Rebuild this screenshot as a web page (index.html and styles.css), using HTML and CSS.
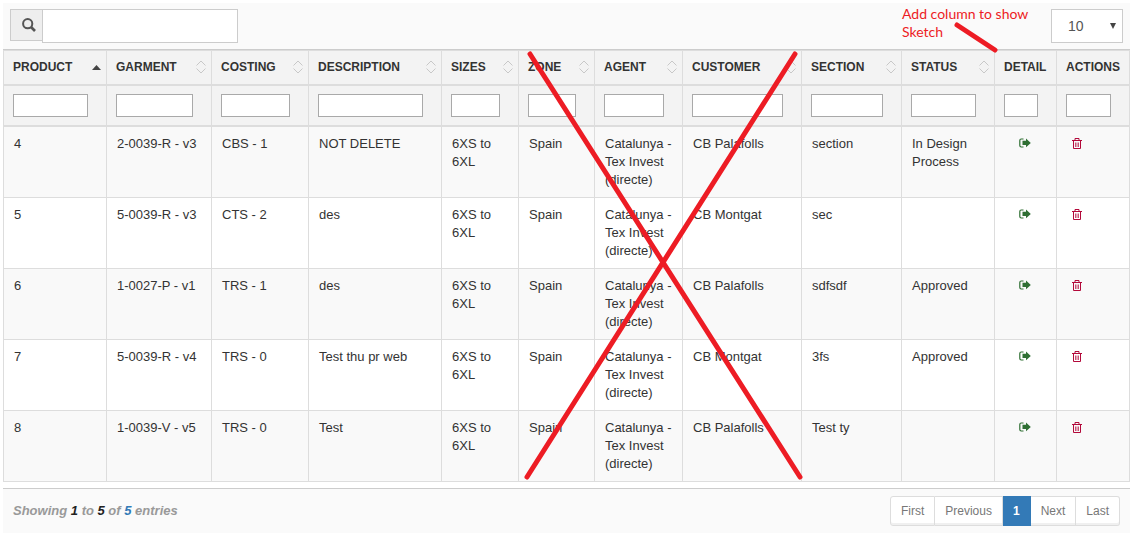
FILE: index.html
```html
<!DOCTYPE html>
<html lang="en">
<head>
<meta charset="utf-8">
<title>Products</title>
<link rel="stylesheet" href="styles.css">
</head>
<body>
<svg class="sprite" aria-hidden="true">
  <symbol id="open" viewBox="0 0 12 10">
    <path d="M4.500 1H2.200Q.8 1 .8 2.400V7.600Q.8 9 2.200 9H4.500" fill="none" stroke="currentColor" stroke-width="1.200"/>
    <path d="M3.500 2.800H7V.5L11.800 5 7 9.300V7H3.500Z" fill="currentColor"/>
  </symbol>
  <symbol id="trash" viewBox="0 0 10 11">
    <path d="M0 2.500H10M3 2.500V.5H7V2.500M1.500 2.500V10.500H8.500V2.500" fill="none" stroke="currentColor"/>
    <path d="M3.500 4.500V9M5 4.500V9M6.500 4.500V9" fill="none" stroke="currentColor" stroke-width=".7"/>
  </symbol>
  <symbol id="sort" viewBox="0 0 10 14">
    <path d="M.5 5.500 5 1 9.500 5.500M.5 8.500 5 13 9.500 8.500" fill="none" stroke="currentColor"/>
  </symbol>
</svg>
<main class="grid-panel">
  <div class="toolbar">
    <form class="search">
      <button class="search-button" type="button" aria-label="Search">
        <svg width="14" height="14" viewBox="0 0 14 14" aria-hidden="true"><circle cx="5.700" cy="5.700" r="4.600" fill="none" stroke="currentColor" stroke-width="2"/><path d="M9 9 13 13" stroke="currentColor" stroke-width="2.600"/></svg>
      </button>
      <input class="search-input" type="text" aria-label="Search products">
    </form>
    <p class="note">Add column to show<br>Sketch</p>
    <select class="page-size" aria-label="Entries per page"><option>10</option><option>25</option><option>50</option></select>
    <svg class="caret" width="6" height="6" viewBox="0 0 6 6" aria-hidden="true"><path d="M0 0H6L3 6Z" fill="currentColor"/></svg>
  </div>
  <table class="grid">
    <colgroup><col class="c1"><col class="c2"><col class="c3"><col class="c4"><col class="c5"><col class="c6"><col class="c7"><col class="c8"><col class="c9"><col class="c10"><col class="c11"><col class="c12"></colgroup>
    <thead>
      <tr class="heads">
        <th><div class="head">PRODUCT<svg class="sorted" width="9" height="5" viewBox="0 0 9 5"><path d="M0 5 4.500 0 9 5Z" fill="currentColor"/></svg></div></th>
        <th><div class="head">GARMENT<svg class="sort"><use href="#sort"/></svg></div></th>
        <th><div class="head">COSTING<svg class="sort"><use href="#sort"/></svg></div></th>
        <th><div class="head">DESCRIPTION<svg class="sort"><use href="#sort"/></svg></div></th>
        <th><div class="head">SIZES<svg class="sort"><use href="#sort"/></svg></div></th>
        <th><div class="head">ZONE<svg class="sort"><use href="#sort"/></svg></div></th>
        <th><div class="head">AGENT<svg class="sort"><use href="#sort"/></svg></div></th>
        <th><div class="head">CUSTOMER<svg class="sort"><use href="#sort"/></svg></div></th>
        <th><div class="head">SECTION<svg class="sort"><use href="#sort"/></svg></div></th>
        <th><div class="head">STATUS<svg class="sort"><use href="#sort"/></svg></div></th>
        <th><div class="head">DETAIL</div></th>
        <th><div class="head">ACTIONS</div></th>
      </tr>
      <tr class="filters">
        <td><input type="text" aria-label="Filter product"></td><td><input type="text" aria-label="Filter garment"></td><td><input type="text" aria-label="Filter costing"></td><td><input type="text" aria-label="Filter description"></td><td><input type="text" aria-label="Filter sizes"></td><td><input type="text" aria-label="Filter zone"></td><td><input type="text" aria-label="Filter agent"></td><td><input type="text" aria-label="Filter customer"></td><td><input type="text" aria-label="Filter section"></td><td><input type="text" aria-label="Filter status"></td><td><input type="text" aria-label="Filter detail"></td><td><input type="text" aria-label="Filter actions"></td>
      </tr>
    </thead>
    <tbody>
      <tr><td>4</td><td>2-0039-R - v3</td><td>CBS - 1</td><td>NOT DELETE</td><td>6XS to 6XL</td><td>Spain</td><td>Catalunya - Tex Invest (directe)</td><td>CB Palafolls</td><td>section</td><td>In Design Process</td><td class="detail"><a href="#" aria-label="Open"><svg class="open"><use href="#open"/></svg></a></td><td class="actions"><button type="button" aria-label="Delete"><svg class="trash"><use href="#trash"/></svg></button></td></tr>
      <tr><td>5</td><td>5-0039-R - v3</td><td>CTS - 2</td><td>des</td><td>6XS to 6XL</td><td>Spain</td><td>Catalunya - Tex Invest (directe)</td><td>CB Montgat</td><td>sec</td><td></td><td class="detail"><a href="#" aria-label="Open"><svg class="open"><use href="#open"/></svg></a></td><td class="actions"><button type="button" aria-label="Delete"><svg class="trash"><use href="#trash"/></svg></button></td></tr>
      <tr><td>6</td><td>1-0027-P - v1</td><td>TRS - 1</td><td>des</td><td>6XS to 6XL</td><td>Spain</td><td>Catalunya - Tex Invest (directe)</td><td>CB Palafolls</td><td>sdfsdf</td><td>Approved</td><td class="detail"><a href="#" aria-label="Open"><svg class="open"><use href="#open"/></svg></a></td><td class="actions"><button type="button" aria-label="Delete"><svg class="trash"><use href="#trash"/></svg></button></td></tr>
      <tr><td>7</td><td>5-0039-R - v4</td><td>TRS - 0</td><td>Test thu pr web</td><td>6XS to 6XL</td><td>Spain</td><td>Catalunya - Tex Invest (directe)</td><td>CB Montgat</td><td>3fs</td><td>Approved</td><td class="detail"><a href="#" aria-label="Open"><svg class="open"><use href="#open"/></svg></a></td><td class="actions"><button type="button" aria-label="Delete"><svg class="trash"><use href="#trash"/></svg></button></td></tr>
      <tr><td>8</td><td>1-0039-V - v5</td><td>TRS - 0</td><td>Test</td><td>6XS to 6XL</td><td>Spain</td><td>Catalunya - Tex Invest (directe)</td><td>CB Palafolls</td><td>Test ty</td><td></td><td class="detail"><a href="#" aria-label="Open"><svg class="open"><use href="#open"/></svg></a></td><td class="actions"><button type="button" aria-label="Delete"><svg class="trash"><use href="#trash"/></svg></button></td></tr>
    </tbody>
  </table>
  <footer class="footer">
    <p class="summary">Showing <b>1</b> to <b>5</b> of <b class="total">5</b> entries</p>
    <nav class="pages" aria-label="Pages"><a href="#">First</a><a href="#">Previous</a><a href="#" class="current" aria-current="page">1</a><a href="#">Next</a><a href="#">Last</a></nav>
  </footer>
  <svg class="marks" viewBox="0 0 1127 530" preserveAspectRatio="none" aria-hidden="true">
    <path d="M527 51 797 474M792 51 524 474M954 22 992 47"/>
  </svg>
</main>
</body>
</html>
```
FILE: styles.css
```css
* { box-sizing: border-box; }
body { margin: 3px; background: #fff; color: #333; font: 13px/18px "Liberation Sans", Arial, sans-serif; }
p { margin: 0; }
input, button, select { font: inherit; }
.sprite { display: none; }
.grid-panel { position: relative; }
.marks { position: absolute; inset: 0; width: 100%; height: 100%; pointer-events: none; }
.marks path { fill: none; stroke: #ed1c24; stroke-width: 5px; stroke-linecap: round; vector-effect: non-scaling-stroke; }

.toolbar { position: relative; display: flex; align-items: flex-start; padding: 6px 7px; background: #fafafa; border-bottom: 1px solid #ccc; }
.search { display: flex; align-items: flex-start; margin-right: auto; }
.search-button { display: flex; align-items: center; justify-content: center; width: 32px; height: 32px; padding: 0 0 0 4px; background: #eee; border: 1px solid #ccc; border-right: 0; color: #555; }
.search-input { width: 196px; height: 34px; padding: 6px 12px; background: #fff; border: 1px solid #ccc; }
.note { width: 149px; margin-top: -4px; color: #ed1c24; font: 14px/18px Lato, sans-serif; }
.page-size { width: 72px; height: 34px; padding: 0 16px; appearance: none; background: #fff; border: 1px solid #ccc; border-radius: 0; color: #555; font-size: 14px; }
.caret { position: absolute; top: 20px; right: 14px; color: #444; pointer-events: none; }

.grid { width: 100%; table-layout: fixed; border-collapse: separate; border-spacing: 0; border-top: 1px solid #ddd; border-left: 1px solid #ddd; }
.c1 { width: 103px; } .c2 { width: 105px; } .c3 { width: 97px; } .c4 { width: 133px; }
.c5 { width: 77px; } .c6 { width: 76px; } .c7 { width: 88px; } .c8 { width: 119px; }
.c9 { width: 100px; } .c10 { width: 93px; } .c11 { width: 62px; } .c12 { width: 73px; }
.grid th, .grid td { border-right: 1px solid #ddd; border-bottom: 1px solid #ddd; text-align: left; vertical-align: top; }
.grid thead th, .grid thead td { background: #f3f3f3; border-bottom-width: 2px; }
.grid th { padding: 7px 5px 8px 9px; font-size: 12px; font-weight: 700; white-space: nowrap; }
.head { display: flex; align-items: center; justify-content: space-between; height: 18px; }
.sort { width: 10px; height: 14px; color: #c8c8c8; }
.sorted { color: #444; }
.grid thead td { height: 41px; padding: 8px 18px 8px 9px; }
.filters input { display: block; width: 100%; height: 23px; background: #fff; border: 1px solid #a9a9a9; }
.grid tbody td { padding: 8px 8px 8px 10px; }
.grid tbody tr:nth-child(odd) { background: #f9f9f9; }
.detail a, .actions button { display: flex; align-items: center; height: 16px; }
.grid tbody .detail { padding-right: 12px; }
.detail a { justify-content: center; color: #2f6f33; }
.open { width: 12px; height: 10px; }
.actions button { padding: 0 5px; background: none; border: 0; color: #b3093a; }
.trash { width: 10px; height: 11px; }

.footer { display: flex; align-items: center; justify-content: space-between; margin-top: 6px; padding: 7px 10px; background: #fafafa; border-top: 1px solid #ccc; }
.summary { color: #999; font-style: italic; font-weight: 700; }
.summary b { color: #222; }
.summary .total { color: #337ab7; }
.pages { display: flex; font-size: 12px; }
.pages a { padding: 5px 10px; border: 1px solid #ddd; border-left: 0; background: #fff; box-shadow: inset 0 -2px 0 #f0f0f0; color: #777; text-decoration: none; }
.pages a:first-child { border-left: 1px solid #ddd; border-radius: 3px 0 0 3px; }
.pages a:last-child { border-radius: 0 3px 3px 0; }
.pages .current { background: #337ab7; border-color: #337ab7; box-shadow: none; color: #fff; font-weight: 700; }
```
